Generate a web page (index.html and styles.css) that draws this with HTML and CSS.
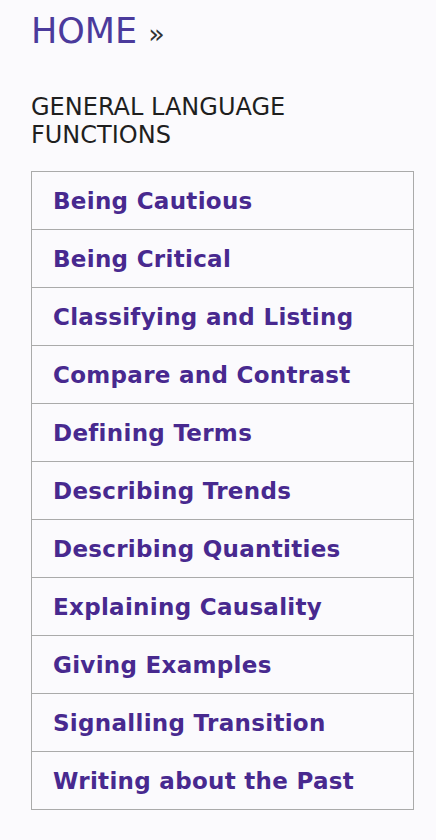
FILE: index.html
```html
<!DOCTYPE html>
<html lang="en">
<head>
    <meta charset="UTF-8">
    <meta name="viewport" content="width=device-width, initial-scale=1.0">
    <title>General Language Functions</title>
    <link rel="stylesheet" href="styles.css">
</head>
<body>
    <div class="page">
        <div class="crumb"><a href="#" class="home">HOME</a> <span class="sep">»</span></div>

        <h2 class="section-title">GENERAL LANGUAGE FUNCTIONS</h2>

        <ul class="menu">
            <li><a href="#">Being Cautious</a></li>
            <li><a href="#">Being Critical</a></li>
            <li><a href="#">Classifying and Listing</a></li>
            <li><a href="#">Compare and Contrast</a></li>
            <li><a href="#">Defining Terms</a></li>
            <li><a href="#">Describing Trends</a></li>
            <li><a href="#">Describing Quantities</a></li>
            <li><a href="#">Explaining Causality</a></li>
            <li><a href="#">Giving Examples</a></li>
            <li><a href="#">Signalling Transition</a></li>
            <li><a href="#">Writing about the Past</a></li>
        </ul>
    </div>
</body>
</html>
```

FILE: styles.css
```css
body {
    margin: 0;
    background: #fbfafd;
    font-family: "DejaVu Sans", Verdana, sans-serif;
    color: #222;
}
.page {
    padding: 9px 22px 0 31px;
}
.crumb {
    font-size: 35px;
    line-height: 44px;
}
.home {
    color: #4b3a9c;
    text-decoration: none;
}
.sep {
    color: #333;
    font-size: 27px;
}
.section-title {
    margin: 37px 0 22px;
    font-size: 24px;
    font-weight: normal;
    line-height: 28px;
    color: #1f1f1f;
}
.menu {
    list-style: none;
    margin: 0;
    padding: 0;
    border: 1px solid #aaa;
}
.menu li {
    border-top: 1px solid #aaa;
    height: 57px;
    display: flex;
    align-items: center;
    padding-left: 21px;
}
.menu li:first-child { border-top: none; }
.menu a {
    color: #48298f;
    font-weight: bold;
    font-size: 23px;
    letter-spacing: 0.3px;
    text-decoration: none;
}
```
